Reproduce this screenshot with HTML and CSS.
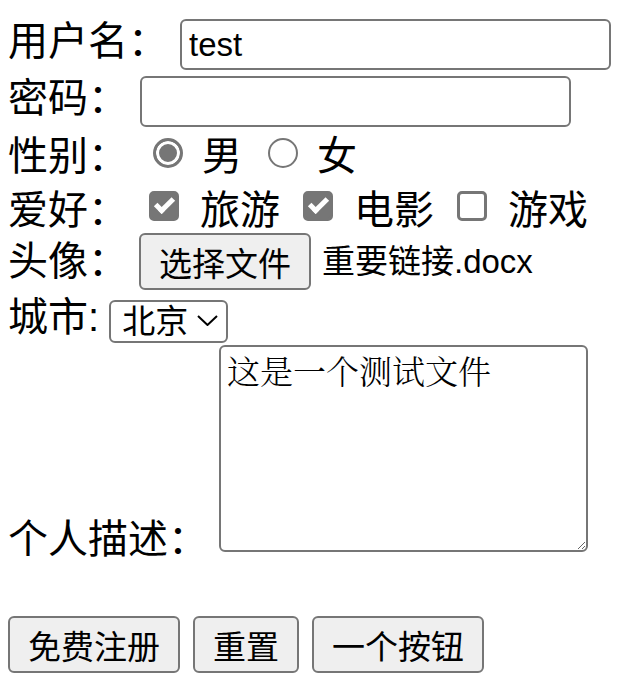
FILE: index.html
```html
<!DOCTYPE html>
<html lang="zh-CN">
<head>
  <meta charset="UTF-8">
  <title>注册</title>
  <link rel="stylesheet" href="styles.css">
</head>
<body>
  <form class="reg" onsubmit="return false">
    <div class="row row-user">
      <span class="lbl">用户名：</span>
      <input class="field" type="text" value="test">
    </div>
    <div class="row row-pass">
      <span class="lbl">密码：</span>
      <input class="field" type="password">
    </div>
    <div class="row row-sex">
      <span class="lbl">性别：</span>
      <input class="radio" type="radio" name="sex" checked><span class="opt">男</span>
      <input class="radio" type="radio" name="sex"><span class="opt">女</span>
    </div>
    <div class="row row-hobby">
      <span class="lbl">爱好：</span>
      <input class="check" type="checkbox" checked><span class="opt">旅游</span>
      <input class="check" type="checkbox" checked><span class="opt">电影</span>
      <input class="check" type="checkbox"><span class="opt">游戏</span>
    </div>
    <div class="row row-avatar">
      <span class="lbl">头像：</span>
      <button class="btn btn-file" type="button">选择文件</button>
      <span class="file-name">重要链接.docx</span>
    </div>
    <div class="row row-city">
      <span class="lbl">城市:</span>
      <span class="select-wrap">
        <select class="city">
          <option>北京</option>
          <option>上海</option>
          <option>广州</option>
        </select>
        <svg class="chevron" width="21" height="11" viewBox="0 0 21 11">
          <path d="M1 1 L10.5 10 L20 1" fill="none" stroke="#000" stroke-width="2"/>
        </svg>
      </span>
    </div>
    <div class="row row-desc">
      <span class="lbl">个人描述：</span>
      <textarea class="desc">这是一个测试文件</textarea>
    </div>
    <div class="row row-actions">
      <button class="btn" type="submit">免费注册</button>
      <button class="btn" type="reset">重置</button>
      <button class="btn" type="button">一个按钮</button>
    </div>
  </form>
</body>
</html>
```

FILE: styles.css
```css
body {
  margin: 8px;
  font-family: "Liberation Sans", "Noto Sans CJK SC", sans-serif;
  font-size: 40px;
  color: #000;
  background: #fff;
}
.row {
  display: flex;
  align-items: center;
}
.lbl,
.opt {
  line-height: 40px;
  white-space: nowrap;
}

/* rows, top to bottom */
.row-user { margin-top: 11px; height: 51px; }
.row-pass { margin-top: 6px; height: 51px; }
.row-sex { margin-top: 9px; height: 40px; }
.row-hobby { margin-top: 14px; height: 40px; }
.row-avatar { margin-top: 3px; height: 57px; }
.row-city { margin-top: 10px; height: 43px; }
.row-desc { margin-top: 2px; height: 207px; align-items: flex-end; }
.row-actions { margin-top: 64px; height: 57px; gap: 13px; }

.row-user .lbl { margin-bottom: 7px; }
.row-pass .lbl { margin-bottom: 8px; }
.row-avatar .lbl { margin-bottom: 2px; }
.row-city .lbl { margin-bottom: 9px; }
.row-desc .lbl { margin-bottom: -7px; }

/* text inputs */
.field {
  box-sizing: border-box;
  width: 431px;
  height: 51px;
  margin: 0 0 0 12px;
  padding: 0 7px;
  border: 2px solid #767676;
  border-radius: 6px;
  font: 33px "Liberation Sans", "Noto Sans CJK SC", sans-serif;
  color: #000;
  background: #fff;
  outline: none;
}

/* radios */
.radio {
  appearance: none;
  box-sizing: border-box;
  width: 30px;
  height: 30px;
  margin: 0 19px 7px 26px;
  border: 2px solid #767676;
  border-radius: 50%;
  background: #fff;
  flex: none;
}
.row-sex .lbl + .radio { margin-left: 25px; }
.radio:checked {
  border-width: 3px;
  background: #767676;
  box-shadow: inset 0 0 0 3px #fff;
}

/* checkboxes */
.check {
  appearance: none;
  position: relative;
  box-sizing: border-box;
  width: 30px;
  height: 30px;
  margin: 0 21px 9px 23px;
  border: 3px solid #767676;
  border-radius: 5px;
  background: #fff;
  flex: none;
}
.row-hobby .lbl + .check { margin-left: 21px; }
.check:checked {
  background: #767676;
}
.check:checked::after {
  content: "";
  position: absolute;
  left: 7px;
  top: 0;
  width: 6px;
  height: 14px;
  border: solid #fff;
  border-width: 0 5px 5px 0;
  transform: rotate(45deg);
}

/* buttons */
.btn {
  box-sizing: border-box;
  height: 57px;
  margin: 0;
  padding: 0 18px;
  border: 2px solid #767676;
  border-radius: 6px;
  background: #efefef;
  font: 33px "Liberation Sans", "Noto Sans CJK SC", sans-serif;
  color: #000;
  white-space: nowrap;
}
.btn-file { margin-left: 11px; }
.file-name {
  margin-left: 11px;
  font-size: 33px;
  line-height: 40px;
  white-space: nowrap;
}

/* select */
.select-wrap {
  position: relative;
  display: block;
  margin-left: 10px;
}
.city {
  appearance: none;
  display: block;
  box-sizing: border-box;
  width: 119px;
  height: 43px;
  margin: 0;
  padding: 0 0 0 11px;
  border: 2px solid #767676;
  border-radius: 6px;
  background: #fff;
  font: 33px "Liberation Sans", "Noto Sans CJK SC", sans-serif;
  color: #000;
}
.chevron {
  position: absolute;
  right: 10px;
  top: 15px;
  pointer-events: none;
}

/* textarea */
.desc {
  box-sizing: border-box;
  width: 369px;
  height: 207px;
  margin: 0 0 0 11px;
  padding: 5px 6px;
  border: 2px solid #767676;
  border-radius: 6px;
  font: 300 33px/36px "Noto Serif CJK SC", "Noto Sans CJK SC", serif;
  color: #000;
  background: #fff;
  resize: both;
}
```
